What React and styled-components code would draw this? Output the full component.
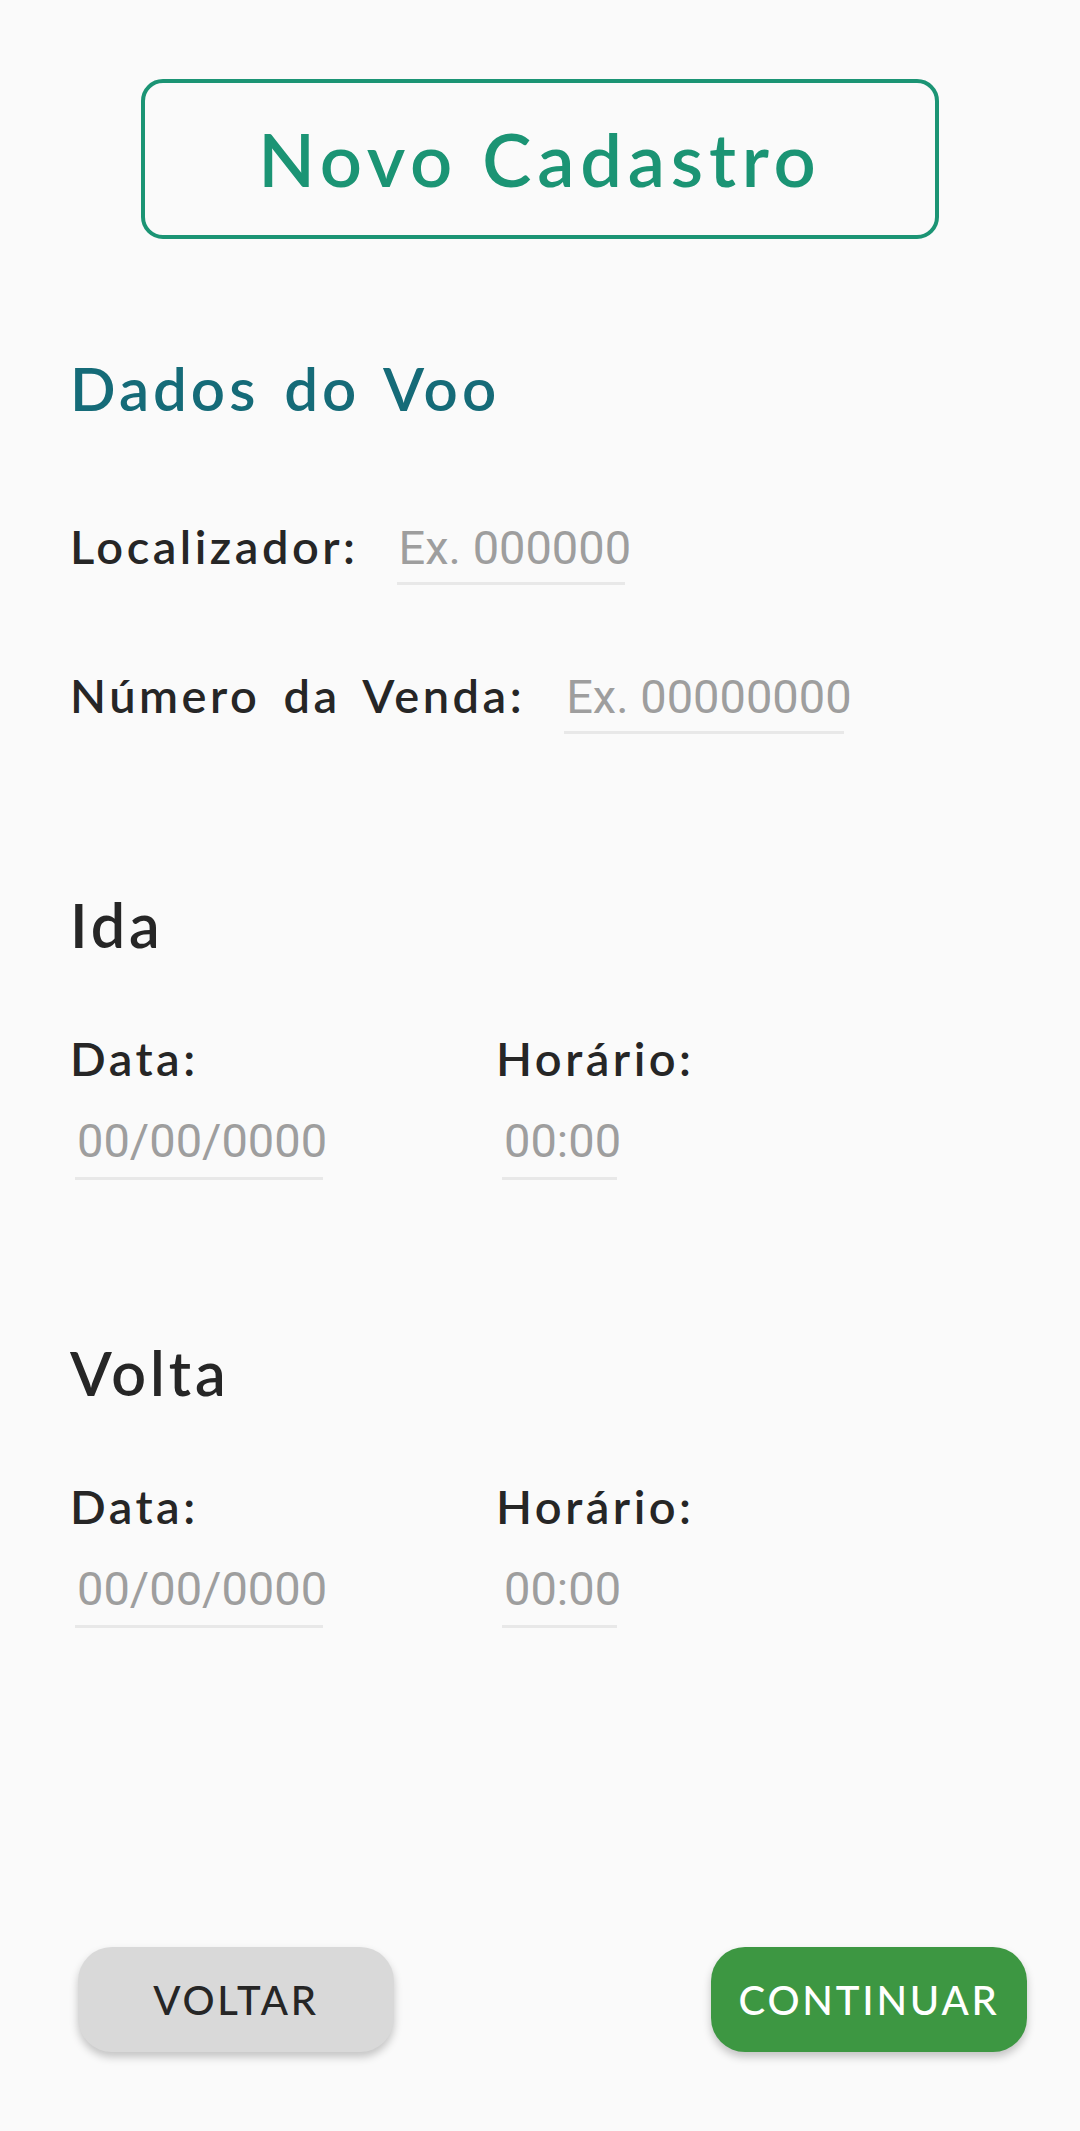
import React from 'react';
import styled, { createGlobalStyle } from 'styled-components';

const GlobalStyle = createGlobalStyle`
  html, body {
    margin: 0;
    padding: 0;
    background: #fafafa;
  }
  * { box-sizing: border-box; }
`;

const Page = styled.div`
  width: 1080px;
  min-height: 2131px;
  background: #fafafa;
  font-family: 'Lato', 'Noto Sans', sans-serif;
  color: #262626;
  display: flex;
  flex-direction: column;
  padding-top: 79px;
`;

const TitleBox = styled.div`
  align-self: center;
  width: 798px;
  height: 160px;
  border: 4px solid #1b9474;
  border-radius: 22px;
  display: flex;
  align-items: center;
  justify-content: center;
  color: #1b9474;
  font-size: 74px;
  line-height: 80px;
  font-weight: 600;
  letter-spacing: 5.8px;
`;

const Content = styled.div`
  padding-left: 70px;
  display: flex;
  flex-direction: column;
`;

const SectionTitle = styled.h2`
  margin: ${(p) => p.$top}px 0 0 0;
  font-size: ${(p) => p.$size || 61}px;
  line-height: 60px;
  font-weight: 600;
  letter-spacing: 4px;
  word-spacing: 6px;
  color: ${(p) => p.$color || '#262626'};
`;

const Row = styled.div`
  display: flex;
  align-items: baseline;
  gap: ${(p) => p.$gap}px;
  margin-top: ${(p) => p.$top}px;
`;

const Label = styled.span`
  font-size: 47px;
  line-height: 48px;
  font-weight: 600;
  letter-spacing: 3.5px;
  word-spacing: 8px;
  color: #262626;
`;

const Field = styled.div`
  width: ${(p) => p.$w}px;
  border-bottom: 3px solid #e8e8e8;
  padding: 0 0 ${(p) => p.$pad || 10}px 2px;
  margin-left: ${(p) => p.$left || 0}px;
  font-family: 'Roboto', sans-serif;
  font-size: 47px;
  line-height: 48px;
  color: #9e9e9e;
  white-space: nowrap;
`;

const Grid = styled.div`
  display: grid;
  grid-template-columns: 426px 1fr;
  margin-top: ${(p) => p.$top}px;
`;

const Col = styled.div`
  display: flex;
  flex-direction: column;
  align-items: flex-start;
  gap: 35px;
`;

const Footer = styled.div`
  margin-top: auto;
  padding: 0 53px 79px 78px;
  display: flex;
  justify-content: space-between;
`;

const Button = styled.button`
  width: 316px;
  height: 105px;
  border: none;
  border-radius: 34px;
  background: ${(p) => (p.$primary ? '#3d9742' : '#d9d9d9')};
  color: ${(p) => (p.$primary ? '#ffffff' : '#262626')};
  font-family: 'Lato', 'Noto Sans', sans-serif;
  font-size: 40px;
  font-weight: 500;
  letter-spacing: 2.8px;
  box-shadow: 0 5px 8px rgba(0, 0, 0, 0.22);
`;

const FlightLeg = ({ title, top }) => (
  <>
    <SectionTitle $top={top}>{title}</SectionTitle>
    <Grid $top={79}>
      <Col>
        <Label>Data:</Label>
        <Field $w={248} $left={5} $pad={12}>00/00/0000</Field>
      </Col>
      <Col>
        <Label>Horário:</Label>
        <Field $w={115} $left={6} $pad={12}>00:00</Field>
      </Col>
    </Grid>
  </>
);

const App = () => {
  return (
    <Page>
      <GlobalStyle />
      <TitleBox>Novo Cadastro</TitleBox>
      <Content>
        <SectionTitle $top={119} $size={60} $color="#156b78">Dados do Voo</SectionTitle>
        <Row $top={104} $gap={38}>
          <Label>Localizador:</Label>
          <Field $w={228}>Ex. 000000</Field>
        </Row>
        <Row $top={86} $gap={39}>
          <Label>Número da Venda:</Label>
          <Field $w={280}>Ex. 00000000</Field>
        </Row>
        <FlightLeg title="Ida" top={161} />
        <FlightLeg title="Volta" top={163} />
      </Content>
      <Footer>
        <Button>VOLTAR</Button>
        <Button $primary>CONTINUAR</Button>
      </Footer>
    </Page>
  );
};

export default App;
